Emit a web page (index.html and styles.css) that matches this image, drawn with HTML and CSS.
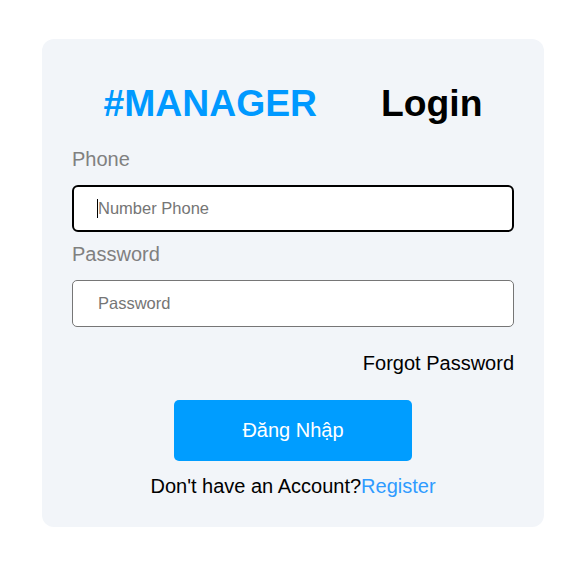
FILE: index.html
```html
<!DOCTYPE html>
<html lang="vi">
<head>
<meta charset="utf-8">
<title>Login</title>
<link rel="stylesheet" href="styles.css">
</head>
<body>
<div class="card">
  <div class="title">
    <h1 class="brand">#MANAGER</h1>
    <h1 class="heading">Login</h1>
  </div>
  <form class="form">
    <label class="label label-first" for="phone">Phone</label>
    <div class="field">
      <input id="phone" class="input input-active" type="text" placeholder="Number Phone">
      <span class="caret"></span>
    </div>
    <label class="label" for="password">Password</label>
    <div class="field">
      <input id="password" class="input" type="password" placeholder="Password">
    </div>
    <div class="forgot"><a href="#" class="forgot-link">Forgot Password</a></div>
    <div class="actions"><button type="button" class="btn">Đăng Nhập</button></div>
    <p class="register">Don't have an Account?<a href="#" class="register-link">Register</a></p>
  </form>
</div>
</body>
</html>
```
FILE: styles.css
```css
* { box-sizing: border-box; }
html, body { margin: 0; padding: 0; background: #ffffff; }
body {
  font-family: "Liberation Sans", Arial, sans-serif;
  padding: 39px 0 0 42px;
}
.card {
  width: 502px;
  height: 488px;
  background: #f2f5f9;
  border-radius: 12px;
  padding: 43px 30px 0 30px;
}
.title {
  display: flex;
  justify-content: center;
  gap: 64px;
}
.brand, .heading {
  margin: 0;
  font-size: 37.3px;
  font-weight: bold;
  line-height: 42px;
}
.brand { color: #0099ff; }
.heading { color: #000000; }
.form {
  display: flex;
  flex-direction: column;
}
.label {
  font-size: 20px;
  line-height: 23px;
  color: #808080;
  margin-top: 11px;
  margin-bottom: 14px;
}
.label-first { margin-top: 24px; }
.field { position: relative; }
.input {
  display: block;
  width: 100%;
  height: 47px;
  border: 1px solid #767676;
  border-radius: 5px;
  background: #ffffff;
  padding: 0 0 0 25px;
  font-family: "Liberation Sans", Arial, sans-serif;
  font-size: 16.5px;
  color: #000;
  outline: none;
}
.input::placeholder { color: #757575; }
.input-active {
  border: 2px solid #000000;
  border-radius: 6px;
  padding-left: 24px;
}
.caret {
  position: absolute;
  left: 25px;
  top: 14px;
  width: 1px;
  height: 19px;
  background: #000;
}
.forgot {
  display: flex;
  justify-content: flex-end;
  margin-top: 25px;
}
.forgot-link {
  font-size: 20px;
  line-height: 23px;
  color: #000000;
  text-decoration: none;
}
.actions {
  display: flex;
  justify-content: center;
  margin-top: 25px;
}
.btn {
  width: 238px;
  height: 61px;
  border: none;
  border-radius: 5px;
  background: #009dff;
  color: #ffffff;
  font-family: "Liberation Sans", Arial, sans-serif;
  font-size: 20px;
  cursor: pointer;
}
.register {
  margin: 14px 0 0 0;
  text-align: center;
  font-size: 20px;
  line-height: 23px;
  color: #000000;
}
.register-link {
  color: #2f9bff;
  text-decoration: none;
}
```
